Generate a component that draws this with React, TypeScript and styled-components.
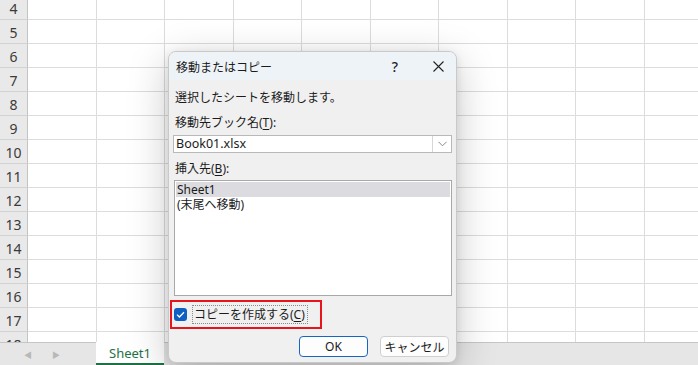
import React from "react";
import styled, { createGlobalStyle } from "styled-components";

const GlobalStyle = createGlobalStyle`
  html, body {
    margin: 0;
    padding: 0;
    background: #ffffff;
    overflow: hidden;
  }
  * { box-sizing: border-box; }
`;

const UI_FONT = `"Noto Sans", "Noto Sans CJK JP", sans-serif`;

const Page = styled.div`
  position: relative;
  width: 698px;
  height: 365px;
  display: flex;
  flex-direction: column;
  overflow: hidden;
  font-family: ${UI_FONT};
`;

const SheetArea = styled.div`
  height: 342px;
  overflow: hidden;
  flex: none;
`;

const Grid = styled.div`
  display: grid;
  grid-template-columns: 28px repeat(10, 68.5px);
  grid-auto-rows: 24px;
  margin-top: -4px;
`;

const RowHeader = styled.div`
  background: #e9e9e9;
  border-right: 1px solid #c4c4c4;
  border-bottom: 1px solid #d2d2d2;
  display: flex;
  align-items: center;
  justify-content: center;
  font-family: "Noto Sans", sans-serif;
  font-size: 14px;
  color: #3a3a3a;
  padding-top: 1px;
`;

const Cell = styled.div`
  border-right: 1px solid #dcdcdc;
  border-bottom: 1px solid #dcdcdc;
  background: #ffffff;
`;

const TabBar = styled.div`
  flex: 1;
  display: flex;
  align-items: stretch;
  background: #e6e6e6;
  border-top: 1px solid #c6c6c6;
`;

const NavArrows = styled.div`
  width: 96px;
  display: flex;
  align-items: center;
  gap: 20px;
  padding-left: 24px;
  color: #b8b8b8;
  font-size: 8px;
`;

const SheetTab = styled.div`
  width: 68px;
  background: #ffffff;
  color: #1e7145;
  font-size: 13px;
  display: flex;
  align-items: center;
  justify-content: center;
  border-bottom: 2px solid #1e7145;
  margin-top: -1px;
`;

const Dialog = styled.div`
  position: absolute;
  left: 168px;
  top: 51px;
  width: 289px;
  height: 312px;
  background: #f0f0f0;
  border: 1px solid #c9c9c9;
  border-radius: 8px;
  box-shadow: 0 10px 40px rgba(0, 0, 0, 0.22), 0 2px 8px rgba(0, 0, 0, 0.1);
  display: flex;
  flex-direction: column;
  overflow: hidden;
  font-family: ${UI_FONT};
  font-size: 12px;
  color: #1b1b1b;
`;

const TitleBar = styled.div`
  height: 28px;
  background: #eef3f8;
  display: flex;
  align-items: center;
  padding-left: 7px;
  flex: none;
`;

const Title = styled.div`
  flex: 1;
  font-size: 12px;
  padding-top: 2px;
`;

const TitleButton = styled.div<{ $w: number }>`
  width: ${(p) => p.$w}px;
  height: 28px;
  display: flex;
  align-items: center;
  justify-content: center;
  font-size: 14px;
  font-weight: 500;
  color: #222;
`;

const Body = styled.div`
  flex: 1;
  display: flex;
  flex-direction: column;
  padding: 0 4px 0 4px;
`;

const Label = styled.div<{ $mt: number }>`
  margin-top: ${(p) => p.$mt}px;
  padding-left: 2px;
  height: 16px;
  line-height: 16px;
  white-space: nowrap;
`;

const Ul = styled.span`
  text-decoration: underline;
  text-underline-offset: 2px;
`;

const Combo = styled.div`
  margin-top: 4px;
  height: 18px;
  background: #ffffff;
  border: 1px solid #b9b9b9;
  display: flex;
  align-items: stretch;
`;

const ComboText = styled.div`
  flex: 1;
  padding-left: 2px;
  line-height: 16px;
  font-size: 12.5px;
`;

const ComboButton = styled.div`
  width: 19px;
  border-left: 1px solid #d6d6d6;
  display: flex;
  align-items: center;
  justify-content: center;
`;

const ListBox = styled.div`
  margin-top: 3px;
  margin-left: 1px;
  height: 116px;
  background: #ffffff;
  border: 1px solid #a8a8a8;
  padding: 1px;
`;

const ListItem = styled.div<{ $selected?: boolean }>`
  height: 15px;
  line-height: 15px;
  padding-left: 1px;
  font-size: 12px;
  background: ${(p) => (p.$selected ? "#dcdce0" : "transparent")};
`;

const Highlight = styled.div`
  margin-top: 4px;
  margin-left: -3px;
  width: 152px;
  height: 29px;
  border: 2px solid #e8141c;
  display: flex;
  align-items: center;
  padding-left: 2px;
  gap: 5px;
`;

const CheckBox = styled.div`
  width: 13px;
  height: 13px;
  border-radius: 3px;
  background: #0f5fc2;
  display: flex;
  align-items: center;
  justify-content: center;
  flex: none;
`;

const CheckLabel = styled.div`
  border: 1px dotted #8a8a8a;
  height: 19px;
  line-height: 17px;
  padding: 0 2px 0 1px;
  white-space: nowrap;
`;

const ButtonRow = styled.div`
  margin-top: 7px;
  display: flex;
  justify-content: flex-end;
  gap: 12px;
  padding-right: 3px;
`;

const Button = styled.div<{ $primary?: boolean }>`
  width: 69px;
  height: 21px;
  border-radius: 4px;
  background: #fdfdfd;
  border: 1px solid ${(p) => (p.$primary ? "#1466c4" : "#cfcfcf")};
  display: flex;
  align-items: center;
  justify-content: center;
  font-size: 12px;
  color: #1b1b1b;
`;

const rows = Array.from({ length: 15 }, (_, i) => i + 4);
const cols = Array.from({ length: 10 }, (_, i) => i);

export default function App() {
  return (
    <>
      <GlobalStyle />
      <Page>
        <SheetArea>
          <Grid>
            {rows.map((r) => (
              <React.Fragment key={r}>
                <RowHeader>{r}</RowHeader>
                {cols.map((c) => (
                  <Cell key={c} />
                ))}
              </React.Fragment>
            ))}
          </Grid>
        </SheetArea>
        <TabBar>
          <NavArrows>
            <span>◀</span>
            <span>▶</span>
          </NavArrows>
          <SheetTab>Sheet1</SheetTab>
        </TabBar>

        <Dialog>
          <TitleBar>
            <Title>移動またはコピー</Title>
            <TitleButton $w={50}>?</TitleButton>
            <TitleButton $w={36}>
              <svg width="11" height="11" viewBox="0 0 11 11">
                <path d="M0.5 0.5 L10.5 10.5 M10.5 0.5 L0.5 10.5" stroke="#222" strokeWidth="1.1" />
              </svg>
            </TitleButton>
          </TitleBar>
          <Body>
            <Label $mt={10}>選択したシートを移動します。</Label>
            <Label $mt={9}>
              移動先ブック名(<Ul>T</Ul>):
            </Label>
            <Combo>
              <ComboText>Book01.xlsx</ComboText>
              <ComboButton>
                <svg width="9" height="6" viewBox="0 0 9 6">
                  <path d="M0.5 0.8 L4.5 4.8 L8.5 0.8" fill="none" stroke="#8a8a8a" strokeWidth="1" />
                </svg>
              </ComboButton>
            </Combo>
            <Label $mt={8}>
              挿入先(<Ul>B</Ul>):
            </Label>
            <ListBox>
              <ListItem $selected>Sheet1</ListItem>
              <ListItem>(末尾へ移動)</ListItem>
            </ListBox>
            <Highlight>
              <CheckBox>
                <svg width="9" height="7" viewBox="0 0 9 7">
                  <path d="M1 3.6 L3.4 6 L8 1.2" fill="none" stroke="#ffffff" strokeWidth="1.3" />
                </svg>
              </CheckBox>
              <CheckLabel>
                コピーを作成する(<Ul>C</Ul>)
              </CheckLabel>
            </Highlight>
            <ButtonRow>
              <Button $primary>OK</Button>
              <Button>キャンセル</Button>
            </ButtonRow>
          </Body>
        </Dialog>
      </Page>
    </>
  );
}
